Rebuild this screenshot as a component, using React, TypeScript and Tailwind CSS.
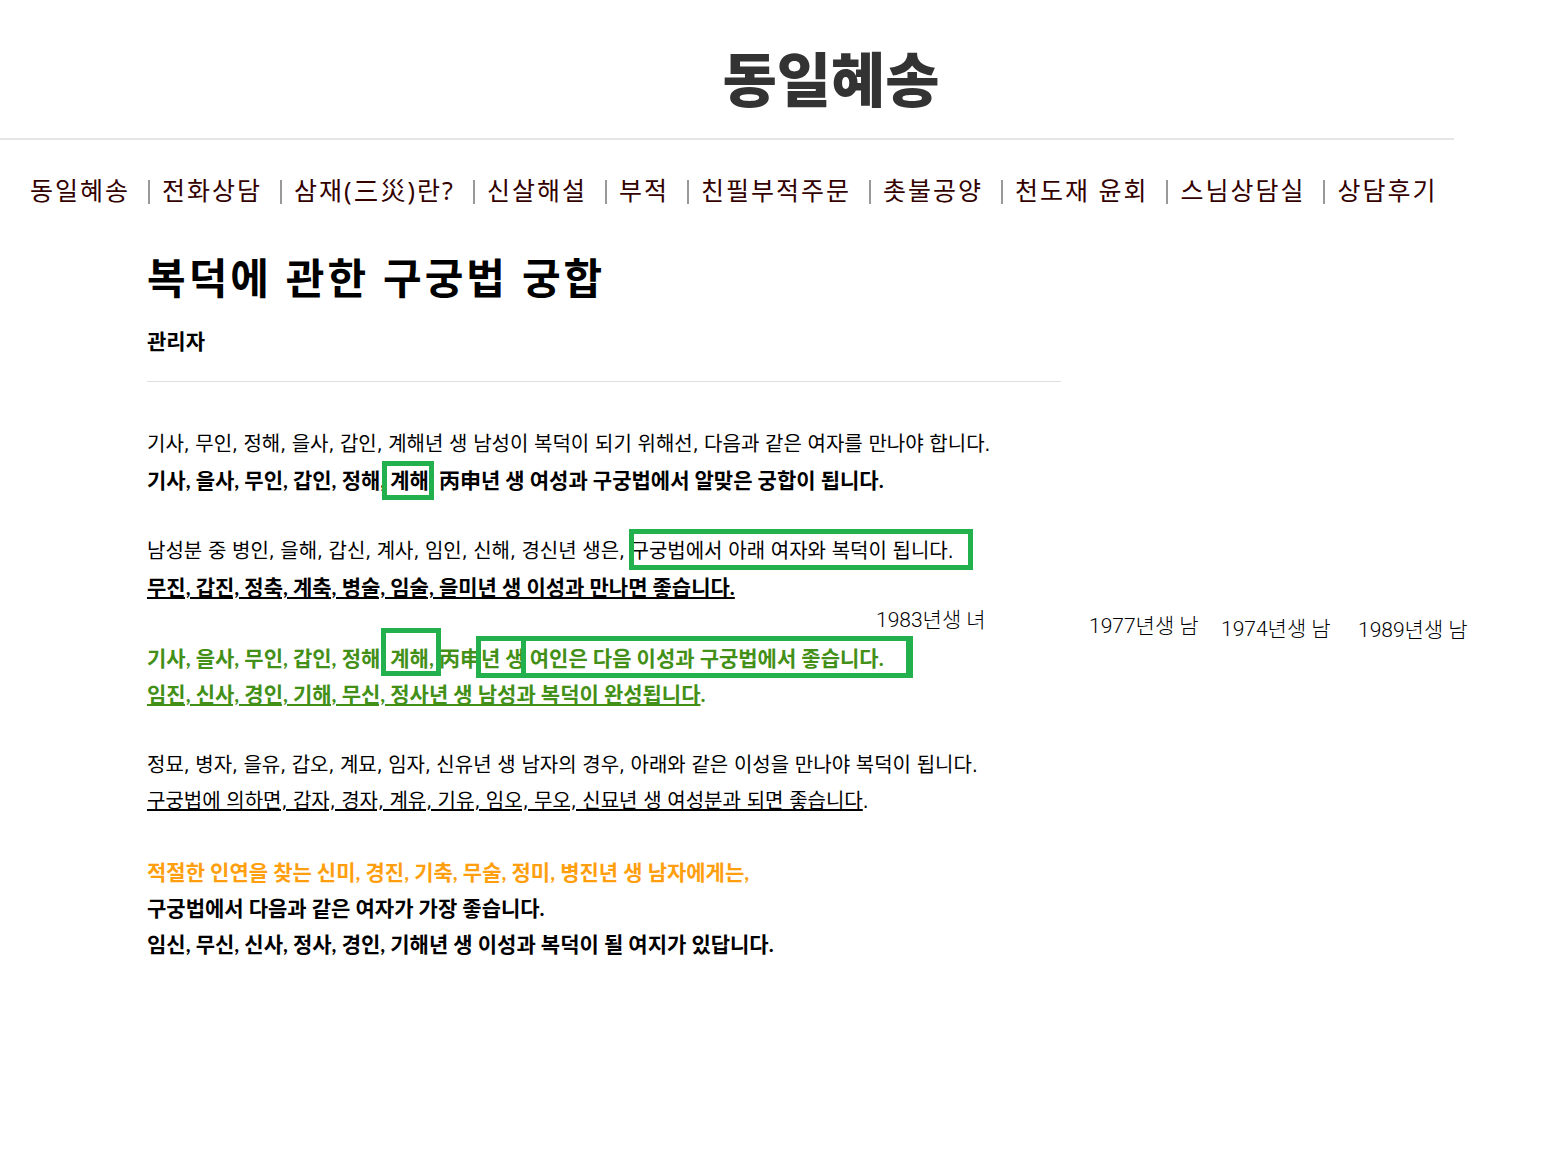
import React from 'react'

interface Line {
  text: string
  tail?: string
  underline?: boolean
  className: string
}

const MENU: string[] = ["동일혜송","전화상담","삼재(三災)란?","신살해설","부적","친필부적주문","촛불공양","천도재 윤회","스님상담실","상담후기"]

const NORMAL = "font-['DejaVu_Sans_Condensed','Noto_Sans_CJK_KR',sans-serif] text-[20px]"
const BOLD = "font-['Lato','Noto_Sans_CJK_KR',sans-serif] text-[21px] font-bold"

const PARAGRAPHS: Line[][] = [
  [
    { text: "기사, 무인, 정해, 을사, 갑인, 계해년 생 남성이 복덕이 되기 위해선, 다음과 같은 여자를 만나야 합니다.", className: NORMAL },
    { text: "기사, 을사, 무인, 갑인, 정해, 계해, 丙申년 생 여성과 구궁법에서 알맞은 궁합이 됩니다.", className: BOLD },
  ],
  [
    { text: "남성분 중 병인, 을해, 갑신, 계사, 임인, 신해, 경신년 생은, 구궁법에서 아래 여자와 복덕이 됩니다.", className: NORMAL },
    { text: "무진, 갑진, 정축, 계축, 병술, 임술, 을미년 생 이성과 만나면 좋습니다.", underline: true, className: BOLD },
  ],
  [
    { text: "기사, 을사, 무인, 갑인, 정해, 계해, 丙申년 생 여인은 다음 이성과 구궁법에서 좋습니다.", className: `${BOLD} text-[#439018]` },
    { text: "임진, 신사, 경인, 기해, 무신, 정사년 생 남성과 복덕이 완성됩니다", tail: ".", underline: true, className: `${BOLD} text-[#439018]` },
  ],
  [
    { text: "정묘, 병자, 을유, 갑오, 계묘, 임자, 신유년 생 남자의 경우, 아래와 같은 이성을 만나야 복덕이 됩니다.", className: NORMAL },
    { text: "구궁법에 의하면, 갑자, 경자, 계유, 기유, 임오, 무오, 신묘년 생 여성분과 되면 좋습니다", tail: ".", underline: true, className: NORMAL },
  ],
  [
    { text: "적절한 인연을 찾는 신미, 경진, 기축, 무술, 정미, 병진년 생 남자에게는,", className: `${BOLD} text-[#ff9f0f]` },
    { text: "구궁법에서 다음과 같은 여자가 가장 좋습니다.", className: BOLD },
    { text: "임신, 무신, 신사, 정사, 경인, 기해년 생 이성과 복덕이 될 여지가 있답니다.", className: BOLD },
  ],
]

// hand drawn marks, placed from the top left corner of the text
const MARKS: string[] = [
  "left-[235px] top-[35px] w-[52px] h-[39px]",
  "left-[482px] top-[103px] w-[344px] h-[41px]",
  "left-[234px] top-[202px] w-[60px] h-[48px]",
  "left-[329px] top-[210px] w-[50px] h-[42px]",
  "left-[374px] top-[210px] w-[392px] h-[42px] border-r-7",
]

const NOTES = [
  { text: "1983년생 녀", place: "left-[729px] top-[180px]" },
  { text: "1977년생 남", place: "left-[942px] top-[186px]" },
  { text: "1974년생 남", place: "left-[1074px] top-[189px]" },
  { text: "1989년생 남", place: "left-[1211px] top-[190px]" },
]

const Header:React.FC = () => {
  return (
    <header className="mr-[107px]">
      <div className="flex h-[140px] justify-center border-b-2 border-[#e5e5e5] pt-[39px] pl-[208px]">
        <a href="#" className="text-[59px] leading-[80px] font-black text-[#333333]">동일혜송</a>
      </div>
      <nav className="pt-[33px] pl-[30px]">
        <ul className="flex">
          {MENU.map((item,i)=>(
            <li key={item} className="flex shrink-0 items-center">
              {i > 0 && <span className="mt-1 mr-3 ml-[18px] h-6 w-[2px] bg-[#999999]" />}
              <a href="#" className="text-[25px] leading-[34px] tracking-[2px] whitespace-nowrap text-[#330000]">{item}</a>
            </li>
          ))}
        </ul>
      </nav>
    </header>
  )
}

const Annotations:React.FC = () => {
  return (
    <div className="pointer-events-none absolute top-0 left-0">
      {MARKS.map((mark)=>(
        <span key={mark} className={`absolute border-5 border-[#22b14c] ${mark}`} />
      ))}
      {NOTES.map((note)=>(
        <span key={note.text} className={`absolute font-['Roboto','Noto_Sans_CJK_KR',sans-serif] text-[21px] leading-[28px] font-light whitespace-nowrap ${note.place}`}>{note.text}</span>
      ))}
    </div>
  )
}

const App:React.FC = () => {
  return (
    <div className="min-h-screen overflow-x-hidden bg-white font-['Noto_Sans','Noto_Sans_CJK_KR',sans-serif] text-black">
      <Header />
      <main className="pt-[39px] pb-20 pl-[147px]">
        <div className="mr-[500px] border-b border-[#dddddd] pb-[22px]">
          <h1 className="text-[42px] leading-[64px] font-bold tracking-[3px]">복덕에 관한 구궁법 궁합</h1>
          <p className="mt-[13px] text-[21px] leading-[36px] font-bold">관리자</p>
        </div>
        <article className="relative mt-11 flex flex-col gap-[35px] leading-[36px]">
          {PARAGRAPHS.map((lines,i)=>(
            <div key={i}>
              {lines.map((line)=>(
                <p key={line.text} className="h-9 whitespace-nowrap">
                  <span className={line.className}>
                    {line.underline ? <u>{line.text}</u> : line.text}
                    {line.tail}
                  </span>
                </p>
              ))}
            </div>
          ))}
          <Annotations />
        </article>
      </main>
    </div>
  )
}

export default App
